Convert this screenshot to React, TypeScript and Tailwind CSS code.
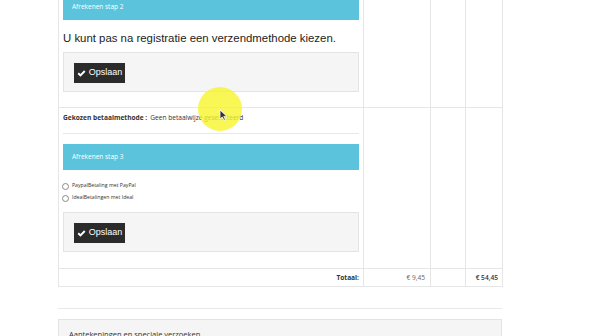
import React from "react";

const sans = { fontFamily: '"Open Sans", "DejaVu Sans", sans-serif' };
const arial = { fontFamily: '"Liberation Sans", Arial, sans-serif' };

const SaveButton: React.FC = () => (
  <button
    className="flex h-[20px] w-[51px] items-center justify-center gap-[3px] bg-[#2b2b2b] text-[9px] text-white"
    style={arial}
  >
    <svg width="9" height="9" viewBox="0 0 16 16" fill="white">
      <path d="M1 8.8 L3.4 6.3 L6.2 9 L12.6 2.4 L15 4.8 L6.2 13.6 Z" />
    </svg>
    Opslaan
  </button>
);

const StepBar: React.FC<{ label: string; className?: string }> = ({ label, className }) => (
  <div
    className={"flex h-[26px] items-center bg-[#5bc4dc] pl-[9px] text-[6.5px] text-white " + (className || "")}
    style={sans}
  >
    {label}
  </div>
);

const Well: React.FC<{ className?: string }> = ({ className }) => (
  <div className={"h-[40px] border border-[#e3e3e3] bg-[#f5f5f5] px-[10px] pt-[10px] " + (className || "")}>
    <SaveButton />
  </div>
);

const Radio: React.FC<{ label: string }> = ({ label }) => (
  <label className="flex h-[12px] items-center gap-[3px] text-[5.2px] text-[#333]" style={sans}>
    <span className="ml-[-1px] block h-[7px] w-[7px] rounded-full border border-[#888] bg-white" />
    {label}
  </label>
);

const App: React.FC = () => {
  return (
    <div className="relative h-[336px] w-[600px] overflow-hidden bg-white">
      <div className="ml-[58px] w-[444px]">
        <table className="w-[444px] table-fixed border-collapse">
          <colgroup>
            <col className="w-[305px]" />
            <col className="w-[67px]" />
            <col className="w-[35px]" />
            <col className="w-[37px]" />
          </colgroup>
          <tbody>
            <tr className="border-b border-[#e6e6e6]">
              <td className="h-[107px] border-x border-[#e6e6e6] px-[4px] pb-[15px] align-top">
                <StepBar label="Afrekenen stap 2" className="mt-[-6px]" />
                <p className="mt-[10px] whitespace-nowrap text-[11.4px] leading-[16px] text-[#222]" style={arial}>
                  U kunt pas na registratie een verzendmethode kiezen.
                </p>
                <Well className="mt-[6px]" />
              </td>
              <td className="border-x border-[#e6e6e6]" />
              <td className="border-x border-[#e6e6e6]" />
              <td className="border-x border-[#e6e6e6]" />
            </tr>
            <tr className="border-b border-[#e6e6e6]">
              <td className="h-[160px] border-x border-[#e6e6e6] px-[4px] pt-[5px] pb-[16px] align-top">
                <div className="flex h-[10px] items-center text-[6.6px] text-[#333]" style={sans}>
                  <span className="font-bold">Gekozen betaalmethode :</span>
                  <span className="ml-[3px]">Geen betaalwijze geselecteerd</span>
                </div>
                <div className="mt-[10px] border-t border-[#e8e8e8]" />
                <StepBar label="Afrekenen stap 3" className="mt-[10px]" />
                <div className="mt-[10px]">
                  <Radio label="PaypalBetaling met PayPal" />
                  <Radio label="IdealBetalingen met Ideal" />
                </div>
                <Well className="mt-[8px]" />
              </td>
              <td className="border-x border-[#e6e6e6]" />
              <td className="border-x border-[#e6e6e6]" />
              <td className="border-x border-[#e6e6e6]" />
            </tr>
            <tr className="border-b border-[#e6e6e6] text-[6.6px]" style={sans}>
              <td className="h-[18px] border-x border-[#e6e6e6] px-[4px] text-right font-bold text-[#333]">
                Totaal:
              </td>
              <td className="border-x border-[#e6e6e6] pr-[5px] text-right text-[#666]">€ 9,45</td>
              <td className="border-x border-[#e6e6e6]" />
              <td className="border-x border-[#e6e6e6] pr-[4px] text-right font-semibold text-[#333]">€ 54,45</td>
            </tr>
          </tbody>
        </table>
        <div className="mt-[21px] border-t border-[#e8e8e8]" />
        <div className="mt-[10px] h-[40px] border border-[#e3e3e3] bg-[#f5f5f5] px-[10px] pt-[9px] text-[7.5px] text-[#333]" style={sans}>
          Aantekeningen en speciale verzoeken
        </div>
      </div>

      {/* cursor highlight */}
      <div className="absolute left-[198px] top-[87px] h-[44px] w-[44px] rounded-full bg-[#f6f52a] opacity-80" />
      <svg className="absolute left-[219px] top-[109px]" width="9" height="12" viewBox="0 0 9 12">
        <path d="M1 1 L1 10 L3.3 8 L5 11.3 L6.4 10.6 L4.8 7.4 L7.8 7.3 Z" fill="#333" stroke="#fff" strokeWidth="0.8" />
      </svg>
    </div>
  );
};

export default App;
